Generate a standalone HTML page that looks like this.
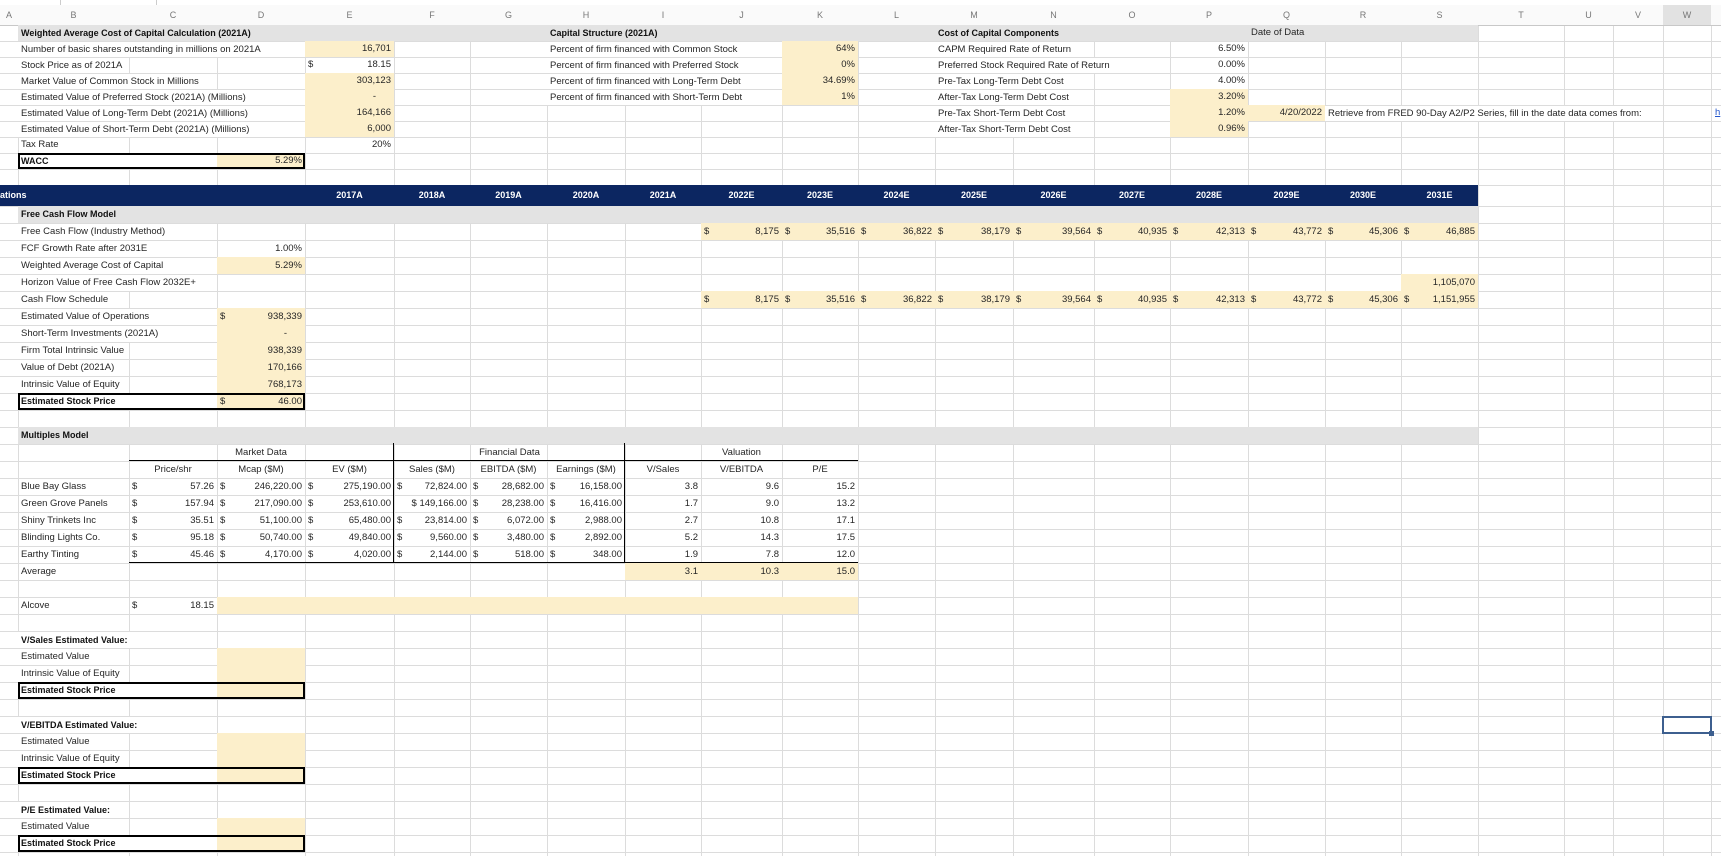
<!DOCTYPE html>
<html><head><meta charset="utf-8"><style>
*{margin:0;padding:0}
body{width:1721px;height:856px;overflow:hidden;background:#fff;position:relative;font-family:"Liberation Sans",Arial,sans-serif;font-size:9.5px;color:#262626}
.row{position:absolute;left:0;width:1721px;height:17px;line-height:17px}
.t{height:16px;line-height:16px}
.c{position:absolute;top:0;height:100%;box-sizing:border-box;padding:0 3px;white-space:nowrap;font-style:normal}
.r{text-align:right}.m{text-align:center}
.b{font-weight:bold;font-size:9px;color:#111}
.y{background:#fcefcb}
.ov{width:auto!important;background:#fff;top:1px;height:calc(100% - 1px);line-height:15px}
.row:not(.t) .ov{line-height:16px}
.g{position:absolute;left:18px;width:1460px;height:100%;background:#e3e3e3;top:0}
.box{position:absolute;left:18px;width:287px;top:0;height:100%;box-sizing:border-box;border:2px solid #000}
.B{left:18px;width:111px}.C{left:129px;width:88px}.D{left:217px;width:88px}.E{left:305px;width:89px}
.F{left:394px;width:76px}.G{left:470px;width:77px}.H{left:547px;width:78px}.I{left:625px;width:76px}
.J{left:701px;width:81px}.K{left:782px;width:76px}.L{left:858px;width:77px}.M{left:935px;width:78px}
.N{left:1013px;width:81px}.O{left:1094px;width:76px}.P{left:1170px;width:78px}.Q{left:1248px;width:77px}
.R{left:1325px;width:76px}.S{left:1401px;width:77px}
.hd{position:absolute;top:5px;height:20px;line-height:20px;text-align:center;color:#777;font-size:9px;border-bottom:1px solid #c8c8c8;background:#fafafa}
.nav{position:absolute;left:0;top:185px;width:1478px;height:21px;line-height:21px;background:#0c2661;color:#fff;font-weight:bold;font-size:9px}
</style></head><body>
<svg width="1721" height="856" style="position:absolute;left:0;top:0">
<g stroke="#dcdcdc" stroke-width="1">
<path d="M18.5 5V856M129.5 5V856M217.5 5V856M305.5 5V856M394.5 5V856M470.5 5V856M547.5 5V856M625.5 5V856M701.5 5V856M782.5 5V856M858.5 5V856M935.5 5V856M1013.5 5V856M1094.5 5V856M1170.5 5V856M1248.5 5V856M1325.5 5V856M1401.5 5V856M1478.5 5V856M1564.5 5V856M1613.5 5V856M1663.5 5V856M1711.5 5V856"/>
<path d="M0 41.5H1721M0 57.5H1721M0 73.5H1721M0 89.5H1721M0 105.5H1721M0 121.5H1721M0 137.5H1721M0 153.5H1721M0 169.5H1721M0 185.5H1721M0 206.5H1721M0 223.5H1721M0 240.5H1721M0 257.5H1721M0 274.5H1721M0 291.5H1721M0 308.5H1721M0 325.5H1721M0 342.5H1721M0 359.5H1721M0 376.5H1721M0 393.5H1721M0 410.5H1721M0 427.5H1721M0 444.5H1721M0 461.5H1721M0 478.5H1721M0 495.5H1721M0 512.5H1721M0 529.5H1721M0 546.5H1721M0 563.5H1721M0 580.5H1721M0 597.5H1721M0 614.5H1721M0 631.5H1721M0 648.5H1721M0 665.5H1721M0 682.5H1721M0 699.5H1721M0 716.5H1721M0 733.5H1721M0 750.5H1721M0 767.5H1721M0 784.5H1721M0 801.5H1721M0 818.5H1721M0 835.5H1721M0 852.5H1721"/>
</g></svg>
<div style="position:absolute;left:60px;top:0;width:95px;height:5px;border:1px solid #ccc;border-top:none"></div>
<div class="hd" style="left:0;width:18px">A</div>
<div class="hd B">B</div><div class="hd C">C</div><div class="hd D">D</div><div class="hd E">E</div><div class="hd F">F</div><div class="hd G">G</div><div class="hd H">H</div><div class="hd I">I</div><div class="hd J">J</div><div class="hd K">K</div><div class="hd L">L</div><div class="hd M">M</div><div class="hd N">N</div><div class="hd O">O</div><div class="hd P">P</div><div class="hd Q">Q</div><div class="hd R">R</div><div class="hd S">S</div>
<div class="hd" style="left:1478px;width:86px">T</div><div class="hd" style="left:1564px;width:49px">U</div><div class="hd" style="left:1613px;width:50px">V</div><div class="hd" style="left:1663px;width:48px;background:#e2e2e2">W</div><div class="hd" style="left:1711px;width:10px"></div>

<div class="row t" style="top:25px"><div class="g"></div><i class="c B b">Weighted Average Cost of Capital Calculation (2021A)</i><i class="c H b">Capital Structure (2021A)</i><i class="c M b">Cost of Capital Components</i><i class="c Q">Date of Data</i></div>
<div class="row t" style="top:41px"><i class="c B ov">Number of basic shares outstanding in millions on 2021A</i><i class="c E r y">16,701</i><i class="c H ov">Percent of firm financed with Common Stock</i><i class="c K r y">64%</i><i class="c M ov">CAPM Required Rate of Return</i><i class="c P r">6.50%</i></div>
<div class="row t" style="top:57px"><i class="c B ov">Stock Price as of 2021A</i><i class="c E">$</i><i class="c E r">18.15</i><i class="c H ov">Percent of firm financed with Preferred Stock</i><i class="c K r y">0%</i><i class="c M ov">Preferred Stock Required Rate of Return</i><i class="c P r">0.00%</i></div>
<div class="row t" style="top:73px"><i class="c B ov">Market Value of Common Stock in Millions</i><i class="c E r y">303,123</i><i class="c H ov">Percent of firm financed with Long-Term Debt</i><i class="c K r y">34.69%</i><i class="c M ov">Pre-Tax Long-Term Debt Cost</i><i class="c P r">4.00%</i></div>
<div class="row t" style="top:89px"><i class="c B ov">Estimated Value of Preferred Stock (2021A) (Millions)</i><i class="c E r y" style="padding-right:18px">-</i><i class="c H ov">Percent of firm financed with Short-Term Debt</i><i class="c K r y">1%</i><i class="c M ov">After-Tax Long-Term Debt Cost</i><i class="c P r y">3.20%</i></div>
<div class="row t" style="top:105px"><i class="c B ov">Estimated Value of Long-Term Debt (2021A) (Millions)</i><i class="c E r y">164,166</i><i class="c M ov">Pre-Tax Short-Term Debt Cost</i><i class="c P r y">1.20%</i><i class="c Q r y">4/20/2022</i><i class="c R ov">Retrieve from FRED 90-Day A2/P2 Series, fill in the date data comes from:</i><i class="c" style="left:1712px;color:#2255cc;text-decoration:underline">h</i></div>
<div class="row t" style="top:121px"><i class="c B ov">Estimated Value of Short-Term Debt (2021A) (Millions)</i><i class="c E r y">6,000</i><i class="c M ov">After-Tax Short-Term Debt Cost</i><i class="c P r y">0.96%</i></div>
<div class="row t" style="top:137px"><i class="c B">Tax Rate</i><i class="c E r">20%</i></div>
<div class="row t" style="top:153px"><div style="position:absolute;left:18px;width:199px;height:16px;background:#fff"></div><i class="c D r y">5.29%</i><div class="box"></div><i class="c B b">WACC</i></div>

<div class="nav"><span style="position:absolute;left:0">ations</span>
<i class="c E m">2017A</i><i class="c F m">2018A</i><i class="c G m">2019A</i><i class="c H m">2020A</i><i class="c I m">2021A</i><i class="c J m">2022E</i><i class="c K m">2023E</i><i class="c L m">2024E</i><i class="c M m">2025E</i><i class="c N m">2026E</i><i class="c O m">2027E</i><i class="c P m">2028E</i><i class="c Q m">2029E</i><i class="c R m">2030E</i><i class="c S m">2031E</i></div>

<div class="row" style="top:206px"><div class="g"></div><i class="c B b">Free Cash Flow Model</i></div>
<div class="row" style="top:223px"><i class="c B ov">Free Cash Flow (Industry Method)</i>
<div class="y" style="position:absolute;left:701px;width:777px;height:17px"></div>
<i class="c J">$</i><i class="c J r">8,175</i><i class="c K">$</i><i class="c K r">35,516</i><i class="c L">$</i><i class="c L r">36,822</i><i class="c M">$</i><i class="c M r">38,179</i><i class="c N">$</i><i class="c N r">39,564</i><i class="c O">$</i><i class="c O r">40,935</i><i class="c P">$</i><i class="c P r">42,313</i><i class="c Q">$</i><i class="c Q r">43,772</i><i class="c R">$</i><i class="c R r">45,306</i><i class="c S">$</i><i class="c S r">46,885</i></div>
<div class="row" style="top:240px"><i class="c B ov">FCF Growth Rate after 2031E</i><i class="c D r">1.00%</i></div>
<div class="row" style="top:257px"><i class="c B ov">Weighted Average Cost of Capital</i><i class="c D r y">5.29%</i></div>
<div class="row" style="top:274px"><i class="c B ov">Horizon Value of Free Cash Flow 2032E+</i><i class="c S r y">1,105,070</i></div>
<div class="row" style="top:291px"><i class="c B ov">Cash Flow Schedule</i>
<div class="y" style="position:absolute;left:701px;width:777px;height:17px"></div>
<i class="c J">$</i><i class="c J r">8,175</i><i class="c K">$</i><i class="c K r">35,516</i><i class="c L">$</i><i class="c L r">36,822</i><i class="c M">$</i><i class="c M r">38,179</i><i class="c N">$</i><i class="c N r">39,564</i><i class="c O">$</i><i class="c O r">40,935</i><i class="c P">$</i><i class="c P r">42,313</i><i class="c Q">$</i><i class="c Q r">43,772</i><i class="c R">$</i><i class="c R r">45,306</i><i class="c S">$</i><i class="c S r">1,151,955</i></div>
<div class="row" style="top:308px"><i class="c B ov">Estimated Value of Operations</i><i class="c D r y">938,339</i><i class="c D">$</i></div>
<div class="row" style="top:325px"><i class="c B ov">Short-Term Investments (2021A)</i><i class="c D r y" style="padding-right:18px">-</i></div>
<div class="row" style="top:342px"><i class="c B ov">Firm Total Intrinsic Value</i><i class="c D r y">938,339</i></div>
<div class="row" style="top:359px"><i class="c B ov">Value of Debt (2021A)</i><i class="c D r y">170,166</i></div>
<div class="row" style="top:376px"><i class="c B ov">Intrinsic Value of Equity</i><i class="c D r y">768,173</i></div>
<div class="row" style="top:393px"><div style="position:absolute;left:18px;width:199px;height:17px;background:#fff"></div><i class="c D r y">46.00</i><i class="c D">$</i><div class="box"></div><i class="c B b">Estimated Stock Price</i></div>

<div class="row" style="top:427px"><div class="g"></div><i class="c B b">Multiples Model</i></div>
<div class="row" style="top:444px"><i class="c m" style="left:129px;width:264px">Market Data</i><i class="c m" style="left:394px;width:231px">Financial Data</i><i class="c m" style="left:625px;width:233px">Valuation</i></div>
<div class="row" style="top:461px"><i class="c C m">Price/shr</i><i class="c D m">Mcap ($M)</i><i class="c E m">EV ($M)</i><i class="c F m">Sales ($M)</i><i class="c G m">EBITDA ($M)</i><i class="c H m">Earnings ($M)</i><i class="c I m">V/Sales</i><i class="c J m">V/EBITDA</i><i class="c K m">P/E</i></div>
<div class="row" style="top:478px"><i class="c B">Blue Bay Glass</i><i class="c C">$</i><i class="c C r">57.26</i><i class="c D">$</i><i class="c D r">246,220.00</i><i class="c E">$</i><i class="c E r">275,190.00</i><i class="c F">$</i><i class="c F r">72,824.00</i><i class="c G">$</i><i class="c G r">28,682.00</i><i class="c H">$</i><i class="c H r">16,158.00</i><i class="c I r">3.8</i><i class="c J r">9.6</i><i class="c K r">15.2</i></div>
<div class="row" style="top:495px"><i class="c B">Green Grove Panels</i><i class="c C">$</i><i class="c C r">157.94</i><i class="c D">$</i><i class="c D r">217,090.00</i><i class="c E">$</i><i class="c E r">253,610.00</i><i class="c F r">$ 149,166.00</i><i class="c G">$</i><i class="c G r">28,238.00</i><i class="c H">$</i><i class="c H r">16,416.00</i><i class="c I r">1.7</i><i class="c J r">9.0</i><i class="c K r">13.2</i></div>
<div class="row" style="top:512px"><i class="c B">Shiny Trinkets Inc</i><i class="c C">$</i><i class="c C r">35.51</i><i class="c D">$</i><i class="c D r">51,100.00</i><i class="c E">$</i><i class="c E r">65,480.00</i><i class="c F">$</i><i class="c F r">23,814.00</i><i class="c G">$</i><i class="c G r">6,072.00</i><i class="c H">$</i><i class="c H r">2,988.00</i><i class="c I r">2.7</i><i class="c J r">10.8</i><i class="c K r">17.1</i></div>
<div class="row" style="top:529px"><i class="c B">Blinding Lights Co.</i><i class="c C">$</i><i class="c C r">95.18</i><i class="c D">$</i><i class="c D r">50,740.00</i><i class="c E">$</i><i class="c E r">49,840.00</i><i class="c F">$</i><i class="c F r">9,560.00</i><i class="c G">$</i><i class="c G r">3,480.00</i><i class="c H">$</i><i class="c H r">2,892.00</i><i class="c I r">5.2</i><i class="c J r">14.3</i><i class="c K r">17.5</i></div>
<div class="row" style="top:546px"><i class="c B">Earthy Tinting</i><i class="c C">$</i><i class="c C r">45.46</i><i class="c D">$</i><i class="c D r">4,170.00</i><i class="c E">$</i><i class="c E r">4,020.00</i><i class="c F">$</i><i class="c F r">2,144.00</i><i class="c G">$</i><i class="c G r">518.00</i><i class="c H">$</i><i class="c H r">348.00</i><i class="c I r">1.9</i><i class="c J r">7.8</i><i class="c K r">12.0</i></div>
<div class="row" style="top:563px"><i class="c B">Average</i><i class="c I r y">3.1</i><i class="c J r y">10.3</i><i class="c K r y">15.0</i></div>
<div style="position:absolute;left:129px;top:460px;width:729px;height:1px;background:#000"></div>
<div style="position:absolute;left:129px;top:562px;width:729px;height:1px;background:#000"></div>
<div style="position:absolute;left:393px;top:443px;width:1px;height:120px;background:#000"></div>
<div style="position:absolute;left:624px;top:443px;width:1px;height:120px;background:#000"></div>
<div class="row" style="top:597px"><i class="c B">Alcove</i><i class="c C">$</i><i class="c C r">18.15</i><div class="y" style="position:absolute;left:217px;width:641px;height:17px"></div></div>

<div class="row" style="top:631px"><i class="c B b ov">V/Sales Estimated Value:</i></div>
<div class="row" style="top:648px"><i class="c B ov">Estimated Value</i><i class="c D y"></i></div>
<div class="row" style="top:665px"><i class="c B ov">Intrinsic Value of Equity</i><i class="c D y"></i></div>
<div class="row" style="top:682px"><div style="position:absolute;left:18px;width:199px;height:17px;background:#fff"></div><i class="c D y"></i><div class="box"></div><i class="c B b">Estimated Stock Price</i></div>
<div class="row" style="top:716px"><i class="c B b ov">V/EBITDA Estimated Value:</i><div style="position:absolute;left:1662px;top:0;width:50px;height:18px;box-sizing:border-box;border:2px solid #3d5f8f"></div><div style="position:absolute;left:1709px;top:15px;width:5px;height:5px;background:#3d5f8f"></div></div>
<div class="row" style="top:733px"><i class="c B ov">Estimated Value</i><i class="c D y"></i></div>
<div class="row" style="top:750px"><i class="c B ov">Intrinsic Value of Equity</i><i class="c D y"></i></div>
<div class="row" style="top:767px"><div style="position:absolute;left:18px;width:199px;height:17px;background:#fff"></div><i class="c D y"></i><div class="box"></div><i class="c B b">Estimated Stock Price</i></div>
<div class="row" style="top:801px"><i class="c B b ov">P/E Estimated Value:</i></div>
<div class="row" style="top:818px"><i class="c B ov">Estimated Value</i><i class="c D y"></i></div>
<div class="row" style="top:835px"><div style="position:absolute;left:18px;width:199px;height:17px;background:#fff"></div><i class="c D y"></i><div class="box"></div><i class="c B b">Estimated Stock Price</i></div>
</body></html>
